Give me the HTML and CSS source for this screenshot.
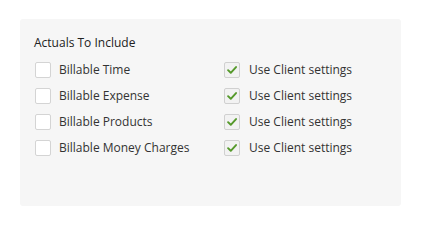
FILE: index.html
```html
<!DOCTYPE html>
<html>
<head>
<meta charset="utf-8">
<link rel="stylesheet" href="styles.css">
</head>
<body>
<div class="panel">
  <div class="title">Actuals To Include</div>
  <div class="grid">
    <div class="opt"><span class="box"></span><span class="lbl">Billable Time</span></div>
    <div class="opt"><span class="box checked"><svg viewBox="0 0 16 16"><path d="M3.5 8.2 L6.6 11.2 L12.6 4.6" /></svg></span><span class="lbl">Use Client settings</span></div>
    <div class="opt"><span class="box"></span><span class="lbl">Billable Expense</span></div>
    <div class="opt"><span class="box checked"><svg viewBox="0 0 16 16"><path d="M3.5 8.2 L6.6 11.2 L12.6 4.6" /></svg></span><span class="lbl">Use Client settings</span></div>
    <div class="opt"><span class="box"></span><span class="lbl">Billable Products</span></div>
    <div class="opt"><span class="box checked"><svg viewBox="0 0 16 16"><path d="M3.5 8.2 L6.6 11.2 L12.6 4.6" /></svg></span><span class="lbl">Use Client settings</span></div>
    <div class="opt"><span class="box"></span><span class="lbl">Billable Money Charges</span></div>
    <div class="opt"><span class="box checked"><svg viewBox="0 0 16 16"><path d="M3.5 8.2 L6.6 11.2 L12.6 4.6" /></svg></span><span class="lbl">Use Client settings</span></div>
  </div>
</div>
</body>
</html>
```
FILE: styles.css
```css
html, body { margin: 0; padding: 0; background: #fff; }
body { font-family: "Open Sans", "Noto Sans", sans-serif; font-size: 12px; color: #333; }
.panel {
  margin: 19px 0 0 20px;
  width: 381px;
  height: 187px;
  box-sizing: border-box;
  background: #f6f6f6;
  border-radius: 3px;
  padding: 15px 15px 0 15px;
}
.title { line-height: 17px; height: 17px; color: #222; margin-left: -1px; }
.grid {
  margin-top: 6px;
  display: grid;
  grid-template-columns: 189px auto;
  grid-auto-rows: 26px;
}
.opt { display: flex; align-items: center; }
.box {
  width: 16px; height: 16px; box-sizing: border-box;
  border: 1px solid #d4d4d4; border-radius: 2px; background: #fff;
  flex: none; display: block;
}
.box.checked { background: #f2f2f2; border-color: #d0d0d0; }
.box svg { display: block; width: 14px; height: 14px; }
.box svg path { fill: none; stroke: #55992b; stroke-width: 2.2; stroke-linecap: round; stroke-linejoin: round; }
.lbl { margin-left: 8px; line-height: 16px; white-space: nowrap; }
.opt:nth-child(2n) .lbl { margin-left: 9px; }
```
